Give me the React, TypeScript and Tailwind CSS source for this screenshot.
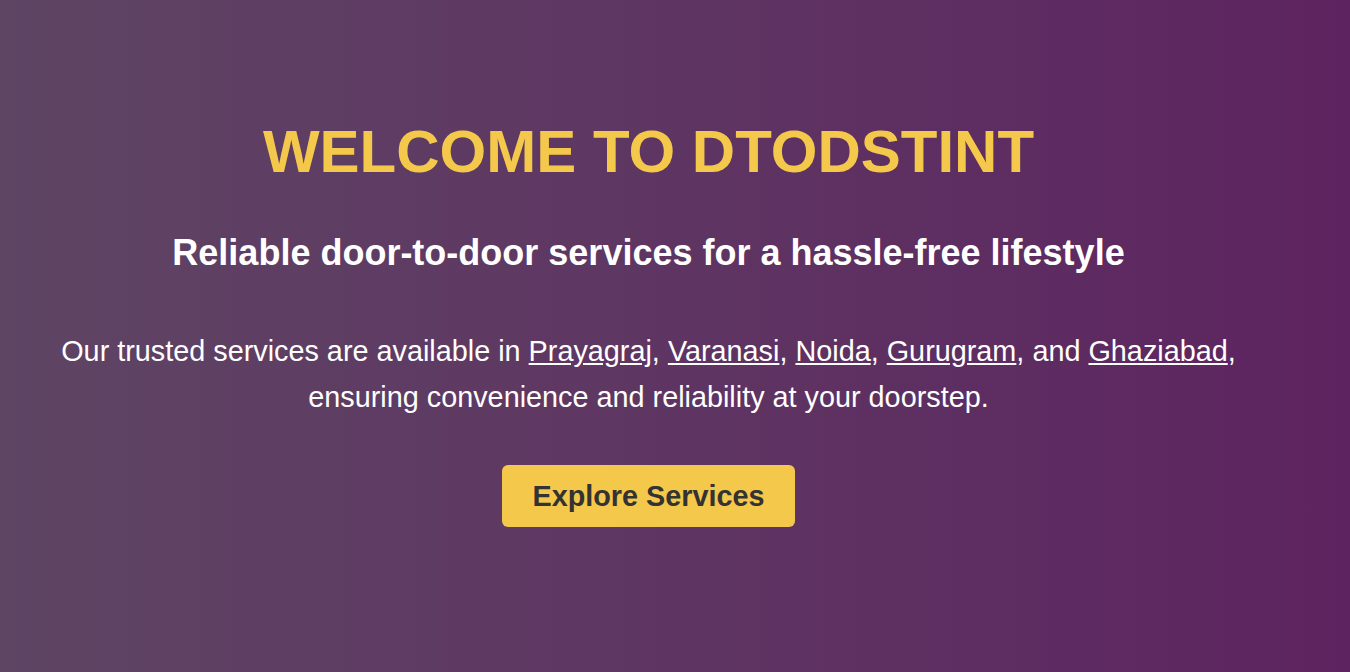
import { Fragment } from "react";

export default function App() {
  const cities = ["Prayagraj", "Varanasi", "Noida", "Gurugram"];

  return (
    <div className="min-h-[672px] w-full bg-gradient-to-r from-[#5e4564] to-[#5d2360] font-['Liberation_Sans',Arial,sans-serif]">
      <section className="flex w-[1297px] flex-col items-center pt-[117px] text-center">
        <h1 className="text-[60px] font-bold leading-[1.15] text-[#f4c84a]">WELCOME TO DTODSTINT</h1>
        <h2 className="mt-[46px] text-[36px] font-bold leading-[1.15] text-white">
          Reliable door-to-door services for a hassle-free lifestyle
        </h2>
        <p className="mt-[55px] max-w-[1220px] text-[28.8px] leading-[46px] text-white">
          Our trusted services are available in{" "}
          {cities.map((city) => (
            <Fragment key={city}>
              <a href="#" className="underline">{city}</a>,{" "}
            </Fragment>
          ))}
          and <a href="#" className="underline">Ghaziabad</a>, ensuring convenience and reliability at your doorstep.
        </p>
        <button className="mt-[45px] flex h-[62px] items-center rounded-md bg-[#f4c84a] px-[30px] text-[28.8px] font-bold leading-[1.15] text-[#333333]">
          Explore Services
        </button>
      </section>
    </div>
  );
}
